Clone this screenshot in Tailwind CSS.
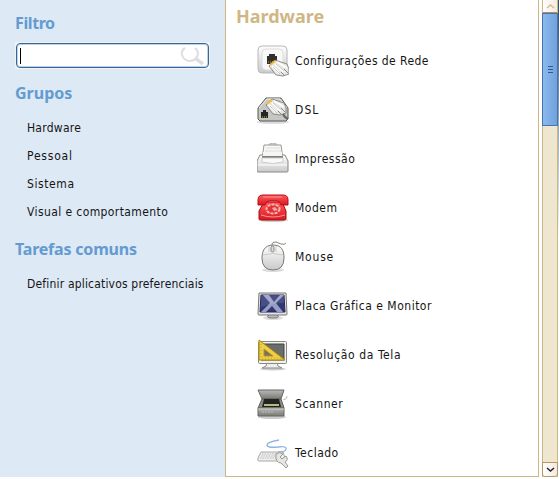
<!DOCTYPE html>
<html lang="pt-BR"><head><meta charset="utf-8"><title>Centro de Controle</title>
<script src="https://cdn.jsdelivr.net/npm/@tailwindcss/browser@4"></script></head>
<body class="w-[559px] h-[479px] overflow-hidden bg-white text-[#151515] font-['DejaVu_Sans_Condensed','DejaVu_Sans',sans-serif] text-[12px] leading-7">
<svg class="absolute w-0 h-0"><defs>
<linearGradient id="g" x2="0" y2="1"><stop stop-color="#fff"/><stop offset="1" stop-color="#c9c9c9"/></linearGradient>
<linearGradient id="d" x2="0" y2="1"><stop stop-color="#b9bab6"/><stop offset="1" stop-color="#777975"/></linearGradient>
<linearGradient id="r" x2="0" y2="1"><stop stop-color="#ff5960"/><stop offset="1" stop-color="#d71920"/></linearGradient>
<g id="plug"><path d="M12 21l6-6 12 4 2 5v5l-6 2-7-1z" fill="#e5e5e2" stroke="#777" stroke-width=".8"/><path d="M15 21l7 7M18 19l9 8M20 17l10 6" stroke="#fff" stroke-width="2"/><path d="M16 22l7 7M19 19l8 7" stroke="#aaa" stroke-width=".6"/><path d="M13 20l5-4" stroke="#f6bd32" stroke-width="2"/><path d="M27 24l4 4M24 27l4 4" stroke="#888"/></g>
</defs></svg>
<div class="flex h-[479px]">
<aside class="w-[225px] h-[477px] bg-[#dde9f5] pl-[15px] shrink-0">
<h2 class="h-[42px] pt-[9px] text-[16px] tracking-[-0.4px] font-bold font-['Noto_Sans',sans-serif] text-[#639bd0]">Filtro</h2>
<div class="w-[195px] h-[27px] border border-[#f1f2f2] bg-white"><div class="flex h-[25px] items-center justify-between border border-[#3d6593] rounded-[4px] bg-white pl-[3px] pr-[4px] shadow-[inset_0_0_0_1px_#b8d3ef]"><span class="w-px h-4 bg-black"></span><svg class="w-6 h-[18px]" viewBox="0 0 24 18" fill="none" stroke="#dedede"><path d="M5 1Q1 3 2 8Q4 14 10 14Q17 13 18 7Q18 3 15 1" stroke-width="2"/><path d="M15 11l8 6" stroke-width="3.500"/></svg></div></div>
<h2 class="h-[45px] pt-[10px] text-[16px] font-bold font-['Noto_Sans',sans-serif] text-[#639bd0]">Grupos</h2>
<ul class="pl-3 tracking-[.35px]"><li class="tracking-[.25px]">Hardware</li><li class="tracking-[.8px]">Pessoal</li><li class="tracking-[.6px]">Sistema</li><li class="tracking-[.4px]">Visual e comportamento</li></ul>
<h2 class="h-[44px] pt-[9px] text-[16px] tracking-[-0.2px] font-bold font-['Noto_Sans',sans-serif] text-[#639bd0]">Tarefas comuns</h2>
<p class="pl-3 tracking-[.18px]">Definir aplicativos preferenciais</p>
</aside>
<main class="w-[314px] h-[477px] border-x border-b border-[#cdb684] pl-[10px] shrink-0 tracking-[.5px]">
<h1 class="h-[36px] pt-[2px] text-[18px] tracking-normal font-bold font-['Noto_Sans',sans-serif] text-[#cfb785]">Hardware</h1>
<ul class="pl-[21px]">
<li class="flex h-[49px] items-center gap-[6px] tracking-[.43px]"><svg class="size-8" viewBox="0 0 32 32"><rect x="1" y="1" width="29" height="27" rx="4" fill="url(#g)" stroke="#b8b8b8"/><rect x="5" y="4" width="21" height="21" rx="4" fill="#f8f8f8" stroke="#ddd"/><path d="M10 19v-8h2V9h6v2h2v8z" fill="#30302d"/><path d="M11 17h7" stroke="#c9a224" stroke-dasharray="1 1"/><use href="#plug"/></svg><span>Configurações de Rede</span></li>
<li class="flex h-[49px] items-center gap-[6px] tracking-[1.1px]"><svg class="size-8" viewBox="0 0 32 32"><ellipse cx="16" cy="28" rx="16" ry="2" fill="#ddd"/><path d="M1 14L9 4H24l7 10v11l-2 2H3l-2-2z" fill="#c5c7c3" stroke="#555753"/><path d="M2 14L10 5H23l7 9" fill="none" stroke="#eee"/><path d="M4 24v-6h2v-2h3v2h2v6z" fill="#252725"/><path d="M5 23h6" stroke="#d9b52e" stroke-dasharray="1 1"/><g transform="translate(-3 -10)"><use href="#plug"/></g><path d="M26 20q2 4 5 5" stroke="#666" stroke-width="2" fill="none"/></svg><span>DSL</span></li>
<li class="flex h-[49px] items-center gap-[6px]"><svg class="size-8" viewBox="0 0 32 32"><path d="M11 3q1-3 5-3t5 3z" fill="#c9ddf1" stroke="#a3bbd3"/><path d="M5 16L7 2H24l2 14z" fill="#f7f7f5" stroke="#999b96"/><path d="M9 5h14M8 8h16" stroke="#deded9"/><path d="M3 12H28l3 6v10q0 1-1 1H1q-1 0-1-1V18z" fill="url(#g)" stroke="#888a85"/><path d="M6 9h19v5H6z" fill="#f6f6f4"/><path d="M5 14h21" stroke="#555753" stroke-width="1.5"/><path d="M5 15h21v4q-10 3-21 0z" fill="#fafafa" stroke="#ccc"/><path d="M1 22h29" stroke="#fff"/></svg><span>Impressão</span></li>
<li class="flex h-[49px] items-center gap-[6px]"><svg class="size-8" viewBox="0 0 32 32"><ellipse cx="16" cy="28" rx="15" ry="2" fill="#ccc"/><path d="M7 10h18l4 9v8l-2 1H4l-2-1v-8z" fill="url(#r)" stroke="#a90808"/><path d="M1 8q0-5 5-5h20q5 0 5 5v5h-7q-1-4-4-4h-8q-3 0-4 4H1z" fill="url(#r)" stroke="#bc0b10"/><ellipse cx="16" cy="17" rx="6.500" ry="4.500" fill="#dd3436" stroke="#ffb4b2" stroke-width="2" stroke-dasharray="3 1"/><path d="M15 16l3-1 3 3-4 1z" fill="#f3a4a1"/><path d="M4 23q12 4 24 0M6 5h19" stroke="#ff9292" fill="none"/></svg><span>Modem</span></li>
<li class="flex h-[49px] items-center gap-[6px] tracking-[.8px]"><svg class="size-8" viewBox="0 0 32 32"><ellipse cx="16" cy="29" rx="11" ry="2" fill="#ddd"/><path d="M15 6V3q0-2 4-2l5 2q4 1 5-1" fill="none" stroke="#858782"/><path d="M16 4C7 4 5 11 5 17q0 12 11 12t11-12C27 10 25 4 16 4z" fill="url(#g)" stroke="#777974"/><path d="M6 14q9-3 20 0M12 5v6m7-6v6" fill="none" stroke="#c9c9c6"/><rect x="14" y="5" width="3" height="6" rx="1.5" fill="#ddd" stroke="#81837e"/></svg><span>Mouse</span></li>
<li class="flex h-[49px] items-center gap-[6px]"><svg class="size-8" viewBox="0 0 32 32"><ellipse cx="16" cy="28" rx="10" ry="2" fill="#ddd"/><path d="M12 24h8l1 2q2 2-5 2t-5-2z" fill="#bbb" stroke="#777"/><path d="M2 3h27l1 21q0 1-1 1H2q-1 0-1-1z" fill="#e4e4e2" stroke="#777974"/><path d="M4 5h23l1 17H3z" fill="#303776" stroke="#222756"/><path d="M6 5h6l5 7 6-7h4l-8 8 7 9h-6l-5-6-6 6H4l9-9z" fill="#989dc3"/><path d="M4 5h23v8q-12 0-23 4z" fill="#fff" opacity=".12"/></svg><span>Placa Gráfica e Monitor</span></li>
<li class="flex h-[49px] items-center gap-[6px] tracking-[.6px]"><svg class="size-8" viewBox="0 0 32 32"><ellipse cx="16" cy="30" rx="13" ry="1.5" fill="#ccc"/><path d="M10 23h10l1 4 4 2H5l4-2z" fill="#eee" stroke="#8b8d88"/><rect x="1.500" y="2.500" width="28" height="22" rx="1" fill="#f0f0ee" stroke="#888a85"/><path d="M4 5h23v16H4z" fill="#6b6d69" stroke="#444"/><path d="M2 1v20h26z" fill="#edcf4b" stroke="#ad8a00"/><path d="M7 10v7h9z" fill="#74735e" stroke="#b69518"/><path d="M4 5v14M5 19h20" stroke="#c2a22c" stroke-dasharray="1 2"/></svg><span>Resolução da Tela</span></li>
<li class="flex h-[49px] items-center gap-[6px] tracking-[.6px]"><svg class="size-8" viewBox="0 0 32 32"><ellipse cx="15" cy="29" rx="14" ry="2" fill="#ccc"/><path d="M26 12q5-1 4-4" fill="none" stroke="#bbb"/><path d="M1 2h26l-3 9H5z" fill="url(#d)" stroke="#666864"/><path d="M5 11h19l3 9H1z" fill="#8b8d88" stroke="#5e605b"/><path d="M7 11h15l2 8H5z" fill="#22251f"/><path d="M7 17h15" stroke="#eee8aa" stroke-width="1.5"/><path d="M1 20h26v8H1z" fill="url(#d)" stroke="#666864"/><path d="M5 24h11" stroke="#bbb" stroke-dasharray="2 1"/><path d="M1 21h26" stroke="#ccc"/></svg><span>Scanner</span></li>
<li class="flex h-[49px] items-center gap-[6px]"><svg class="size-8" viewBox="0 0 32 32"><path d="M21 15q9 0 8-4-1-2-8-1-11 1-11-2 0-3 12-5" fill="none" stroke="#8fb3dc" stroke-width="1.3"/><path d="M4 15h22l2 6q0 3-2 3H2q-2 0-1-3z" fill="#eee" stroke="#a9aba6"/><path d="M5 17h17M4 19h16M3 21h17" stroke="#bbb" stroke-dasharray="1.500 1"/><path d="M19 17q4-3 7 0l-3 3 2 2 4-3q3 4-1 6l3 4-2 2-5-5q-6 0-5-9z" fill="#e5e5e2" stroke="#999b96"/></svg><span>Teclado</span></li>
</ul></main>
<div class="ml-[3px] flex h-[477px] w-4 shrink-0 flex-col border-x border-[#cdb684] bg-[#eee6cf]">
<div class="flex h-[13px] items-center justify-center border-b border-[#a98e65] bg-linear-to-r from-white to-[#f5e8df]"><svg class="w-[9px] h-[6px]" viewBox="0 0 9 6"><path d="M1 5l3.500-3L8 5" fill="none" stroke="#d2be91" stroke-width="1.500"/></svg></div>
<div class="-mx-px flex h-[113px] flex-col items-center justify-center gap-[2px] border border-[#4774ae] bg-linear-to-r from-[#8bb9ed] to-[#71a2dc]"><i class="h-px w-[5px] bg-[#315b8e]"></i><i class="h-px w-[5px] bg-[#315b8e]"></i><i class="h-px w-[5px] bg-[#315b8e]"></i></div>
<div class="-mx-px mt-auto flex h-[15px] items-center justify-center rounded-b-[3px] border border-[#b79768] bg-linear-to-r from-white to-[#f5e8df]"><svg class="w-[9px] h-[6px]" viewBox="0 0 9 6"><path d="M1 1l3.500 3L8 1" fill="none" stroke="#222" stroke-width="1.500"/></svg></div>
</div>
<div class="h-[477px] w-px shrink-0 bg-linear-to-b from-[#344b61] via-[#8da4b8] via-25% to-white to-50%"></div>
</div></body></html>
